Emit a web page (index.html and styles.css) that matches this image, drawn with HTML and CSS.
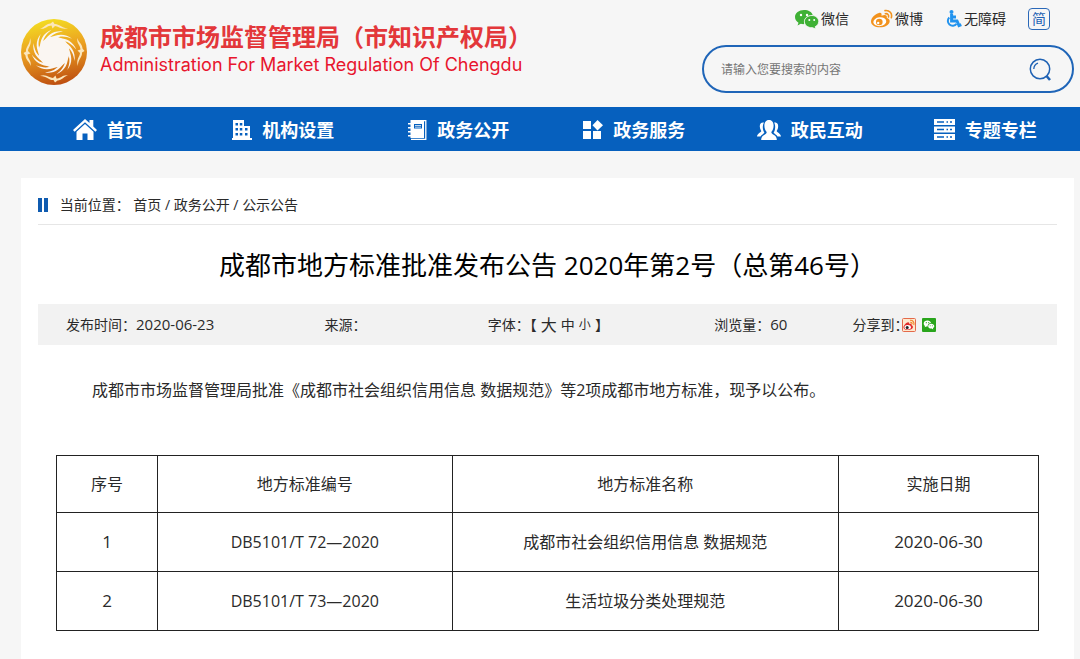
FILE: index.html
```html
<!DOCTYPE html>
<html lang="zh-CN">
<head>
    <meta charset="UTF-8">
    <meta name="viewport" content="width=device-width, initial-scale=1.0">
    <title>成都市市场监督管理局</title>
    <link rel="stylesheet" href="styles.css">
</head>
<body>
    <header class="header container">
        <a class="brand" href="#">
            <svg class="logo" viewBox="0 0 66 66" aria-hidden="true">
                <defs>
                    <linearGradient id="gold" x1="0.4" y1="0" x2="0.6" y2="1">
                        <stop offset="0" stop-color="#f3dc22"/>
                        <stop offset="0.45" stop-color="#eba021"/>
                        <stop offset="1" stop-color="#bd4d10"/>
                    </linearGradient>
                    <path id="ray" d="M22 24C26 16 33 11 42 12.500C35 13.500 30 16 28 20Z"/>
                    <path id="bird" d="M19 9.500C23 9 25 4.500 29.500 4.500L32 2.500L33.500 5C38 4.500 41 9.500 47 9C41 11.500 37.500 7 34 7L31.500 9.500L30.500 6.500C26 6.500 24 11 19 9.500Z"/>
                </defs>
                <circle cx="33" cy="33" r="33" fill="url(#gold)"/>
                <g fill="#faf6f2">
                    <circle cx="33" cy="33" r="15.500"/>
                    <use href="#ray"/>
                    <use href="#ray" transform="rotate(30 33 33)"/>
                    <use href="#ray" transform="rotate(60 33 33)"/>
                    <use href="#ray" transform="rotate(90 33 33)"/>
                    <use href="#ray" transform="rotate(120 33 33)"/>
                    <use href="#ray" transform="rotate(150 33 33)"/>
                    <use href="#ray" transform="rotate(180 33 33)"/>
                    <use href="#ray" transform="rotate(210 33 33)"/>
                    <use href="#ray" transform="rotate(240 33 33)"/>
                    <use href="#ray" transform="rotate(270 33 33)"/>
                    <use href="#ray" transform="rotate(300 33 33)"/>
                    <use href="#ray" transform="rotate(330 33 33)"/>
                </g>
                <g fill="#fbe6bb">
                    <use href="#bird"/>
                    <use href="#bird" transform="rotate(90 33 33)"/>
                    <use href="#bird" transform="rotate(180 33 33)"/>
                    <use href="#bird" transform="rotate(270 33 33)"/>
                </g>
            </svg>
            <div class="brand-text">
                <h1>成都市市场监督管理局（市知识产权局）</h1>
                <p>Administration For Market Regulation Of Chengdu</p>
            </div>
        </a>

        <div class="tools">
            <div class="tool-links">
                <a href="#">
                    <svg width="24" height="20" viewBox="0 0 24 20" aria-hidden="true">
                        <path fill="#3fb135" d="M9 1C4 1 0 4 0 8C0 10.500 1.300 12.400 3.500 13.700L2.500 16.500L5.800 14.800C7 15.100 8 15.200 9.300 15.100C8 10 12 6 17.700 6C17 3 13.500 1 9 1Z"/>
                        <path fill="#3fb135" stroke="#f6f6f6" stroke-width="0.8" d="M17 6.500C12.600 6.500 9.400 9.200 9.400 12.600C9.400 16.200 13 19 17.300 18.600L20.800 20L20.100 17.800C22.400 16.600 23.700 14.700 23.700 12.500C23.700 9.200 20.800 6.500 17 6.500Z"/>
                        <g fill="#fff">
                            <circle cx="6" cy="6" r="1.200"/>
                            <circle cx="12" cy="6" r="1.200"/>
                            <circle cx="14.300" cy="11" r="1"/>
                            <circle cx="19.200" cy="11" r="1"/>
                        </g>
                    </svg>
                    微信
                </a>
                <a href="#">
                    <svg width="22" height="20" viewBox="0 0 22 20" aria-hidden="true">
                        <path fill="#f2921d" d="M8 4C10 3.400 11 4.500 10.500 6.800C14 5.400 16.500 6 15.800 9.100C18 9.800 19 11 18.600 13C18 16 14 18.300 9 18.300C4 18.300 0 16 0 12.500C0 9 4 5 8 4Z"/>
                        <ellipse cx="8.800" cy="12.700" rx="6.500" ry="4.400" fill="#fff" transform="rotate(-7 8.800 12.700)"/>
                        <circle cx="8.300" cy="13" r="3.300" fill="#f2921d"/>
                        <circle cx="7.200" cy="14" r="1.200" fill="#fff"/>
                        <g fill="none" stroke="#f2921d" stroke-width="1.600" stroke-linecap="round">
                            <path d="M14 1.600C18.500 1 21.600 4.400 20.300 8.700"/>
                            <path d="M14.300 4.700C16.700 4.300 18.100 6 17.500 8"/>
                        </g>
                    </svg>
                    微博
                </a>
                <a href="#">
                    <svg width="17" height="18" viewBox="0 0 17 18" aria-hidden="true">
                        <circle cx="6.500" cy="2" r="2" fill="#2293ee"/>
                        <path fill="none" stroke="#2293ee" stroke-width="3" d="M6.600 4V11H12L14 15.600L16.300 14.700M6.600 7H11"/>
                        <path fill="none" stroke="#2293ee" stroke-width="2" d="M4.300 7.500A4.800 4.800 0 1 0 11.500 13.800"/>
                    </svg>
                    无障碍
                </a>
                <a class="lang" href="#">简</a>
            </div>
            <form class="search">
                <input type="text" aria-label="搜索" placeholder="请输入您要搜索的内容">
                <button type="button" aria-label="搜索">
                    <svg width="24" height="24" viewBox="0 0 24 24" fill="none" stroke="#1f62b4" aria-hidden="true">
                        <circle cx="12" cy="12" r="9.700" stroke-width="1.500"/>
                        <path d="M5.800 12A6.300 6.300 0 0 1 10 6.200" stroke-width="1.300"/>
                        <path d="M18.500 19L22 23" stroke-width="2.600"/>
                    </svg>
                </button>
            </form>
        </div>
    </header>

    <nav class="nav">
        <div class="nav-list container">
            <a href="#">
                <svg width="24" height="22" viewBox="0 0 24 22" fill="#fff" aria-hidden="true">
                    <path d="M12 0L0 11L1.600 12.700L12 3.200L22.400 12.700L24 11L20.300 7.600V1H16.500V4.100Z"/>
                    <path d="M12 5L3.500 12.700V21H9.500V14.500H14.500V21H20.500V12.700Z"/>
                </svg>
                首页
            </a>
            <a href="#">
                <svg width="20" height="20" viewBox="0 0 20 20" fill="#fff" aria-hidden="true">
                    <path fill-rule="evenodd" d="M1 0H12V6H18V18H20V20H0V18H1ZM3.500 3V5.500H6V3ZM7.800 3V5.500H10.300V3ZM3.500 8V10.500H6V8ZM7.800 8V10.500H10.300V8ZM3.500 13V15.500H6V13ZM7.800 13V15.500H10.300V13ZM13 8V10.500H15.500V8ZM13 13V15.500H15.500V13Z"/>
                </svg>
                机构设置
            </a>
            <a href="#">
                <svg width="19" height="20" viewBox="0 0 19 20" aria-hidden="true">
                    <path fill="none" stroke="#fff" stroke-width="1.300" d="M3 0.700H17.800V19.300H3"/>
                    <path fill="#fff" fill-rule="evenodd" d="M2.500 0H16V18H2.500V16.500H0V15H2.500V12.500H0V11H2.500V8.500H0V7H2.500V4.500H0V3H2.500ZM6 4V8.500H14V4ZM7 5H13V5.800H7ZM7 6.700H13V7.500H7Z"/>
                </svg>
                政务公开
            </a>
            <a href="#">
                <svg width="20" height="20" viewBox="0 0 20 20" fill="#fff" aria-hidden="true">
                    <rect x="0" y="1" width="8" height="8"/>
                    <rect x="0" y="11" width="8" height="8"/>
                    <rect x="10" y="11" width="8" height="8"/>
                    <path d="M14.500 0L20 5.300L14.500 10.500L9.500 5.300Z"/>
                </svg>
                政务服务
            </a>
            <a href="#">
                <svg width="24" height="20" viewBox="0 0 26 20" preserveAspectRatio="none" fill="#fff" aria-hidden="true">
                    <path id="side" d="M7.500 2.500C4 2 2.700 4.500 3.100 7C3.300 8.700 4 10 4.700 11C4.400 12.600 0.500 13 0 16.500H3.800C4.800 14.700 7 14 8 12.800C6.300 10.500 5.400 6 7.500 2.500Z"/>
                    <use href="#side" transform="matrix(-1 0 0 1 26 0)"/>
                    <path d="M13 0C9.500 0 8 2.500 8 5.500C8 8.500 9 10.500 10.500 12C10.500 15 4.500 14.500 4.500 20H21.500C21.500 14.500 15.500 15 15.500 12C17 10.500 18 8.500 18 5.500C18 2.500 16.500 0 13 0Z"/>
                </svg>
                政民互动
            </a>
            <a href="#">
                <svg width="21" height="21" viewBox="0 0 21 21" aria-hidden="true">
                    <path fill="#fff" d="M0 0H21V6H0ZM0 7.500H21V13.500H0ZM0 15H21V21H0Z"/>
                    <g stroke="#0660be" stroke-width="1.400">
                        <path d="M3 3H10M12.500 3H14M16 3H18"/>
                        <path d="M3 10.500H10M12.500 10.500H14M16 10.500H18"/>
                        <path d="M3 18H10M12.500 18H14M16 18H18"/>
                    </g>
                </svg>
                专题专栏
            </a>
        </div>
    </nav>

    <div class="container">
        <main class="panel">
            <div class="breadcrumb">
                <span>当前位置：</span>
                <a href="#">首页</a> / <a href="#">政务公开</a> / <a href="#">公示公告</a>
            </div>

            <h2>成都市地方标准批准发布公告 2020年第2号（总第46号）</h2>

            <div class="info">
                <span>发布时间：<span class="num">2020-06-23</span></span>
                <span>来源：</span>
                <span class="font-size">字体：【<button type="button" class="big">大</button><button type="button">中</button><button type="button" class="small">小</button>】</span>
                <span>浏览量：<span class="num">60</span></span>
                <span class="share">
                    分享到：
                    <span class="share-icons">
                        <a href="#" aria-label="微博">
                            <svg width="14" height="14" viewBox="0 0 14 14" aria-hidden="true">
                                <rect x="0.500" y="0.500" width="13" height="13" rx="1" fill="#fde9cf" stroke="#e4694a"/>
                                <path fill="#e22b2b" d="M5.500 4.500C7 4 7.500 5 7.200 6C9 5.300 10 6 9.600 7.200C11 7.700 11.300 9 10.500 10.300C9 12.700 2 12.800 1.500 9.700C1.300 8 3.500 5.200 5.500 4.500Z"/>
                                <ellipse cx="5.700" cy="9.300" rx="3.200" ry="2.200" fill="#fff"/>
                                <circle cx="5.200" cy="9.500" r="1.500" fill="#222"/>
                                <path fill="none" stroke="#f28a2e" stroke-width="1.200" d="M8 2.300C11 2 12.500 4.300 11.800 7M8.300 4.300C9.600 4.200 10.300 5 10 6.200"/>
                            </svg>
                        </a>
                        <a href="#" aria-label="微信">
                            <svg width="14" height="14" viewBox="0 0 14 14" aria-hidden="true">
                                <rect width="14" height="14" rx="1" fill="#29a51c"/>
                                <path fill="#fff" d="M5.500 2.500C3.300 2.500 1.700 3.800 1.700 5.500C1.700 6.500 2.200 7.300 3 7.900L2.700 9.200L4.200 8.400H5.600C5.500 6.500 7 5 9 5C8.700 3.500 7.300 2.500 5.500 2.500Z"/>
                                <path fill="#fff" d="M9.200 5.700C7.400 5.700 6.200 6.800 6.200 8.200C6.200 9.700 7.600 10.800 9.800 10.600L11.200 11.400L11 10.100C11.900 9.500 12.300 8.900 12.300 8.200C12.300 6.800 10.900 5.700 9.200 5.700Z"/>
                                <g fill="#29a51c">
                                    <circle cx="4.300" cy="4.700" r="0.600"/>
                                    <circle cx="6.700" cy="4.700" r="0.600"/>
                                    <circle cx="8.200" cy="7.700" r="0.500"/>
                                    <circle cx="10.300" cy="7.700" r="0.500"/>
                                </g>
                            </svg>
                        </a>
                    </span>
                </span>
            </div>

            <div class="article">
                <p>成都市市场监督管理局批准《成都市社会组织信用信息 数据规范》等2项成都市地方标准，现予以公布。</p>
                <table>
                    <colgroup>
                        <col class="col-index">
                        <col class="col-code">
                        <col>
                        <col class="col-date">
                    </colgroup>
                    <thead>
                        <tr>
                            <th>序号</th>
                            <th>地方标准编号</th>
                            <th>地方标准名称</th>
                            <th>实施日期</th>
                        </tr>
                    </thead>
                    <tbody>
                        <tr>
                            <td class="num">1</td>
                            <td>DB5101/T 72—2020</td>
                            <td>成都市社会组织信用信息 数据规范</td>
                            <td class="num">2020-06-30</td>
                        </tr>
                        <tr>
                            <td class="num">2</td>
                            <td>DB5101/T 73—2020</td>
                            <td>生活垃圾分类处理规范</td>
                            <td class="num">2020-06-30</td>
                        </tr>
                    </tbody>
                </table>
            </div>
        </main>
    </div>
</body>
</html>
```
FILE: styles.css
```css
* {
    box-sizing: border-box;
}

body {
    margin: 0;
    background-color: #f6f6f6;
    color: #2a2a2a;
    font-family: "Open Sans", "Noto Sans CJK SC", sans-serif;
    font-size: 14px;
    line-height: 20px;
}

a {
    color: inherit;
    text-decoration: none;
}

svg {
    display: block;
    flex-shrink: 0;
}

h1, h2, p {
    margin: 0;
}

.container {
    padding: 0 6px 0 21px;
}

/* header */
.header {
    display: flex;
    justify-content: space-between;
    min-height: 107px;
}

.brand {
    display: flex;
    align-items: center;
    gap: 13px;
    padding-bottom: 3px;
    white-space: nowrap;
}

.logo {
    width: 66px;
    height: 66px;
}

.brand-text {
    padding-bottom: 3px;
}

.brand h1 {
    color: #e3373a;
    font-size: 24px;
    font-weight: bold;
    line-height: 28px;
}

.brand p {
    color: #e8152d;
    font-family: Inter, sans-serif;
    font-size: 18px;
    line-height: 28px;
}

.tools {
    width: 372px;
    padding-top: 8px;
}

.tool-links {
    display: flex;
    justify-content: flex-end;
    align-items: center;
    gap: 22px;
    padding-right: 24px;
}

.tool-links a {
    display: flex;
    align-items: center;
    gap: 2px;
}

.tool-links .lang {
    justify-content: center;
    width: 22px;
    height: 22px;
    border: 1px solid #2a68b8;
    border-radius: 4px;
    color: #1f62b4;
}

.search {
    display: flex;
    align-items: center;
    height: 48px;
    margin-top: 15px;
    padding: 0 20px 0 17px;
    border: 2px solid #1f65b8;
    border-radius: 24px;
}

.search input {
    flex: 1;
    min-width: 0;
    padding: 0;
    border: none;
    outline: none;
    background: none;
    font-family: inherit;
    font-size: 12px;
}

.search input::placeholder {
    color: #757575;
}

.search button {
    padding: 0;
    border: none;
    background: none;
    cursor: pointer;
}

/* navigation */
.nav {
    background-color: #0660be;
    color: #fff;
}

.nav-list {
    display: grid;
    grid-template-columns: repeat(6, 1fr);
}

.nav-list a {
    display: flex;
    justify-content: center;
    align-items: center;
    gap: 10px;
    height: 44px;
    padding: 1px 2px 0 0;
    font-size: 18px;
    font-weight: bold;
    white-space: nowrap;
}

/* content */
.panel {
    margin-top: 27px;
    padding: 10px 17px 28px;
    background-color: #fff;
}

.breadcrumb {
    padding: 7px 0 9px;
    border-bottom: 1px solid #e6e6e6;
}

.breadcrumb::before {
    content: "";
    display: inline-block;
    box-sizing: border-box;
    width: 10px;
    height: 14px;
    margin-right: 8px;
    border: solid #0f5bb0;
    border-width: 0 4px;
    vertical-align: -2px;
}

.panel h2 {
    padding: 20px 0 19px;
    color: #000;
    font-size: 26px;
    font-weight: normal;
    line-height: 40px;
    text-align: center;
}

.info {
    display: grid;
    grid-template-columns: 258fr 163fr 226fr 138fr 204fr;
    align-items: center;
    height: 41px;
    padding-left: 28px;
    background-color: #f2f2f2;
    white-space: nowrap;
}

.info .num {
    font-size: 15px;
}

.info button {
    padding: 0;
    border: none;
    background: none;
    color: inherit;
    font-family: inherit;
    font-size: 14px;
    line-height: 20px;
    cursor: pointer;
}

.info .big {
    font-size: 16px;
}

.info .small {
    font-size: 12px;
}

.font-size {
    display: flex;
    align-items: center;
    gap: 4px;
}

.share {
    display: flex;
    align-items: center;
    font-feature-settings: "halt";
}

.share-icons {
    display: flex;
    gap: 6px;
}

.article {
    padding: 29px 18px 0;
    font-size: 16px;
    line-height: 32px;
}

.article p {
    margin-bottom: 49px;
    padding-left: 4px;
    text-indent: 2em;
}

table {
    width: 100%;
    border-collapse: collapse;
    table-layout: fixed;
}

th, td {
    padding: 13px 4px;
    border: 1px solid #222;
    font-weight: normal;
    text-align: center;
}

th {
    padding: 12px 4px;
}

td.num {
    font-size: 17px;
}

.col-index {
    width: 101px;
}

.col-code {
    width: 30%;
}

.col-date {
    width: 200px;
}
```
